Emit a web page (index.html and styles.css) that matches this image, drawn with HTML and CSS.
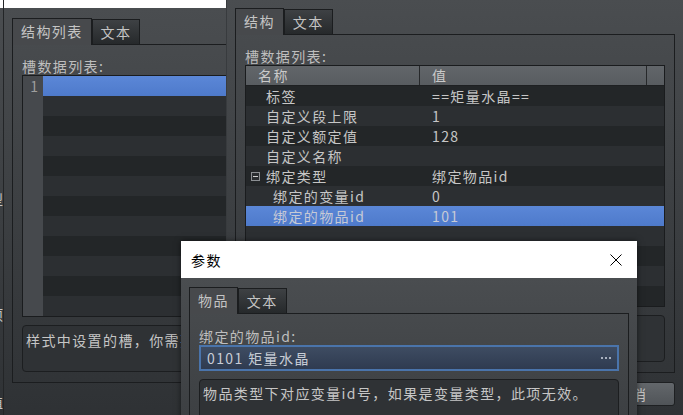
FILE: index.html
```html
<!DOCTYPE html>
<html lang="zh-CN">
<head>
  <meta charset="UTF-8">
  <meta name="viewport" content="width=device-width, initial-scale=1.0">
  <title>参数</title>
  <link rel="stylesheet" href="styles.css">
</head>
<body>
<div class="desktop">

  <!-- window behind, only its right edge shows -->
  <div class="win win-back">
    <div class="titlebar"></div>
    <div class="win-body back-body">
      <span class="peek">型</span>
      <span class="peek p2">：</span>
      <span class="peek p3">项</span>
      <span class="peek p4">值</span>
    </div>
  </div>

  <!-- style editor -->
  <div class="win win-left">
    <div class="titlebar"></div>
    <div class="win-body">
      <div class="tabs">
        <div class="tab active">结构列表</div>
        <div class="tab">文本</div>
      </div>
      <div class="pane">
        <div class="label">槽数据列表:</div>
        <div class="list">
          <div class="gutter">1</div>
          <div class="rows">
            <div class="row sel"></div>
            <div class="row"></div>
            <div class="row"></div>
            <div class="row"></div>
            <div class="row"></div>
            <div class="row"></div>
            <div class="row"></div>
            <div class="row"></div>
            <div class="row"></div>
            <div class="row"></div>
            <div class="row"></div>
            <div class="row"></div>
          </div>
        </div>
        <div class="note">样式中设置的槽，你需要</div>
      </div>
    </div>
  </div>

  <!-- slot editor -->
  <div class="win win-main">
    <div class="win-body">
      <div class="tabs">
        <div class="tab active">结构</div>
        <div class="tab">文本</div>
      </div>
      <div class="pane">
        <div class="label">槽数据列表:</div>
        <div class="tree">
          <div class="tree-head">
            <div class="th name">名称</div>
            <div class="th val">值</div>
            <div class="th end"></div>
          </div>
          <div class="row tr">
            <div class="tc-name">标签</div>
            <div class="tc-val">==矩量水晶==</div>
          </div>
          <div class="row tr">
            <div class="tc-name">自定义段上限</div>
            <div class="tc-val">1</div>
          </div>
          <div class="row tr">
            <div class="tc-name">自定义额定值</div>
            <div class="tc-val">128</div>
          </div>
          <div class="row tr">
            <div class="tc-name">自定义名称</div>
            <div class="tc-val"></div>
          </div>
          <div class="row tr">
            <div class="tc-name group">
              <svg class="fold" width="9" height="9" viewBox="0 0 9 9">
                <rect x="0.5" y="0.5" width="8" height="8" fill="#2a2d30" stroke="#8c8f93"/>
                <rect x="2" y="4" width="5" height="1" fill="#d0d0d0"/>
              </svg>绑定类型
            </div>
            <div class="tc-val">绑定物品id</div>
          </div>
          <div class="row tr">
            <div class="tc-name child">绑定的变量id</div>
            <div class="tc-val">0</div>
          </div>
          <div class="row tr sel">
            <div class="tc-name child">绑定的物品id</div>
            <div class="tc-val">101</div>
          </div>
          <div class="row tr"></div>
          <div class="row tr"></div>
          <div class="row tr"></div>
          <div class="row tr"></div>
        </div>
        <div class="note"></div>
      </div>
      <div class="buttons">
        <div class="btn">取消</div>
      </div>
    </div>
  </div>

  <!-- parameter dialog -->
  <div class="win win-dialog">
    <div class="titlebar dlg-title">
      <span>参数</span>
      <svg width="12" height="12" viewBox="0 0 12 12">
        <path d="M0.5 0.5 L11.5 11.5 M11.5 0.5 L0.5 11.5" stroke="#000" stroke-width="1" fill="none"/>
      </svg>
    </div>
    <div class="win-body dlg-body">
      <div class="tabs">
        <div class="tab active">物品</div>
        <div class="tab">文本</div>
      </div>
      <div class="pane dlg-pane">
        <div class="label">绑定的物品id:</div>
        <div class="combo">
          <span>0101 矩量水晶</span>
          <svg width="11" height="3" viewBox="0 0 11 3">
            <rect x="0" y="0" width="2" height="2" fill="#a9b1c0"/>
            <rect x="4" y="0" width="2" height="2" fill="#a9b1c0"/>
            <rect x="8" y="0" width="2" height="2" fill="#a9b1c0"/>
          </svg>
        </div>
        <div class="note">物品类型下对应变量id号，如果是变量类型，此项无效。</div>
      </div>
    </div>
  </div>

</div>
</body>
</html>
```

FILE: styles.css
```css
* {
  box-sizing: border-box;
}

body {
  margin: 0;
  background: #2f3235;
  font-family: "Noto Sans CJK SC", sans-serif;
  font-size: 14px;
  letter-spacing: 1.4px;
  color: #c6c6c6;
  overflow: hidden;
}

.desktop {
  position: relative;
  width: 683px;
  height: 415px;
  overflow: hidden;
}

/* windows */
.win {
  position: absolute;
  display: flex;
  flex-direction: column;
}

.titlebar {
  flex: none;
  height: 36px;
  background: #fff;
}

.win-body {
  flex: 1;
  background: linear-gradient(#4a4d50, #2e3134);
  padding: 10px 9px 0 8px;
}

.win-back {
  left: -200px;
  top: -28px;
  width: 203px;
  height: 450px;
  z-index: 1;
}

.back-body {
  padding: 182px 0 0 0;
  text-align: right;
  letter-spacing: 0;
}

.peek {
  display: block;
  line-height: 18px;
}

.peek.p2 { margin-top: 20px; }
.peek.p3 { margin-top: 59px; }
.peek.p4 { margin-top: 70px; }

.win-left {
  left: 3px;
  top: -28px;
  width: 458px;
  height: 450px;
  border-left: 1px solid #232527;
  z-index: 2;
}

.win-main {
  left: 226px;
  top: -2px;
  width: 458px;
  height: 430px;
  border-left: 1px solid #383b3e;
  z-index: 3;
}

.win-dialog {
  left: 181px;
  top: 241px;
  width: 456px;
  height: 330px;
  z-index: 4;
  box-shadow: 0 0 6px rgba(0, 0, 0, 0.55);
}

/* tabs */
.tabs {
  display: flex;
  align-items: flex-end;
  height: 26px;
}

.tab {
  height: 25px;
  padding: 0 8px;
  border: 1px solid #1b1d1f;
  border-bottom: none;
  line-height: 24px;
  background: linear-gradient(#3e4144, #26292b);
  color: #c4c4c4;
}

.tab.active {
  position: relative;
  z-index: 1;
  height: 27px;
  margin-bottom: -1px;
  line-height: 25px;
  background: #47494c;
}

.pane {
  border: 1px solid #1b1d1f;
  padding: 12px 9px 10px;
}

.label {
  height: 18px;
  line-height: 18px;
  color: #bebebe;
}

/* left list */
.list {
  display: flex;
  height: 242px;
  border: 1px solid #1a1c1e;
  background: #232628;
}

.gutter {
  width: 20px;
  padding-right: 5px;
  background: #46494d;
  text-align: right;
  line-height: 20px;
  letter-spacing: 0;
  color: #9e9e9e;
}

.rows {
  flex: 1;
}

.row {
  height: 20px;
  background: #232628;
}

.row:nth-child(even) {
  background: #2c2f32;
}

.row.sel {
  background: linear-gradient(#5b87d7, #4e7acb);
  color: #c6cad6;
}

/* tree */
.tree {
  height: 242px;
  border: 1px solid #1a1c1e;
  background: #232628;
}

.tree-head {
  display: flex;
  height: 20px;
  background: linear-gradient(#62666a, #585c60);
  border-bottom: 1px solid #1e2022;
}

.th {
  line-height: 19px;
  padding-left: 12px;
  border-right: 1px solid #26282a;
  color: #cacaca;
}

.th.name { width: 174px; }
.th.val { width: 227px; }
.th.end { flex: 1; border-right: none; }

.tr {
  display: flex;
  line-height: 20px;
}

/* header is the first child, so data rows flip the stripe */
.tree .row:nth-child(even) { background: #232628; }
.tree .row:nth-child(odd) { background: #2c2f32; }
.tree .row.sel { background: linear-gradient(#5b87d7, #4e7acb); }

.tc-name {
  display: flex;
  align-items: center;
  width: 174px;
  padding-left: 20px;
}

.tc-name.group {
  padding-left: 5px;
}

.fold {
  margin-right: 6px;
}

.tc-name.child {
  padding-left: 27px;
}

.tc-val {
  padding-left: 12px;
}

.note {
  height: 47px;
  margin-top: 8px;
  padding: 5px 3px;
  border: 1px solid #1c1e20;
  border-radius: 4px;
  background: #2f3235;
  line-height: 18px;
  white-space: nowrap;
  overflow: hidden;
}

.buttons {
  display: flex;
  justify-content: flex-end;
  margin-top: 9px;
}

.btn {
  width: 86px;
  height: 24px;
  border: 1px solid #1e2022;
  border-radius: 3px;
  background: linear-gradient(#63676b, #505458);
  text-align: center;
  line-height: 22px;
}

/* dialog */
.dlg-title {
  display: flex;
  align-items: center;
  justify-content: space-between;
  height: 37px;
  padding: 0 15px 0 10px;
  color: #000;
}

.dlg-body {
  padding: 9px 8px 0 8px;
}

.dlg-pane {
  padding-top: 13px;
}

.combo {
  display: flex;
  align-items: center;
  justify-content: space-between;
  height: 26px;
  padding: 0 5px 0 6px;
  border: 2px solid #4a74ab;
  background: linear-gradient(#3e4c62, #2f3b50);
  color: #c8cdd6;
}

.dlg-pane .note {
  padding: 4px 3px;
}
```
